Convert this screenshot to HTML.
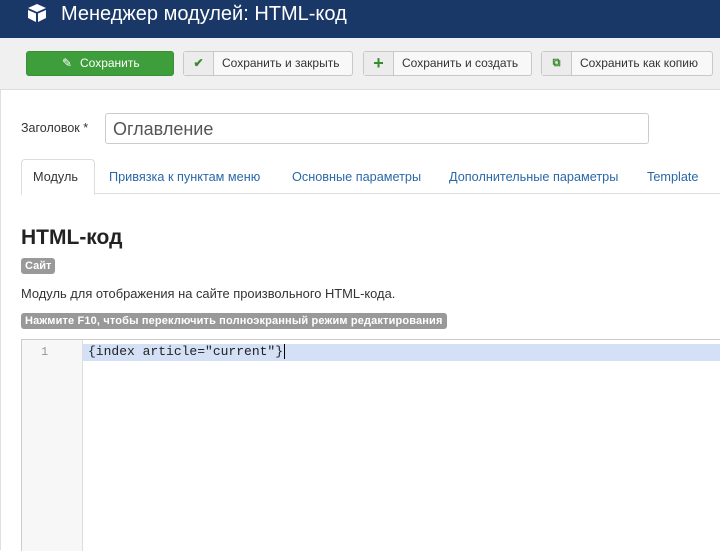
<!DOCTYPE html>
<html><head><meta charset="utf-8"><style>
*{margin:0;padding:0;box-sizing:border-box}
body{width:720px;height:550px;overflow:hidden;background:#fff;font-family:"Liberation Sans",sans-serif;position:relative}
.lb{position:absolute;left:0;top:38px;width:1px;height:512px;background:#e0e0e0}
.hdr{position:absolute;left:0;top:0;width:720px;height:38px;background:#1a3867;color:#fff}
.hdr .t{position:absolute;left:61px;top:2px;font-size:20px;line-height:24px}
.tb{position:absolute;left:0;top:38px;width:720px;height:52px;background:#f0f0f0;border-bottom:1px solid #ddd}
.btn{position:absolute;top:13px;height:25px;border:1px solid #c8c8c8;border-radius:3px;background:#f8f8f8;font-size:12px;color:#333;line-height:23px}
.btn .ic{position:absolute;left:0;top:0;width:30px;height:23px;border-right:1px solid #c8c8c8;background:#ececec;text-align:center;font-weight:bold;color:#3a8a2f}
.btn .tx{position:absolute;left:38px;top:0;white-space:nowrap}
.lbl{position:absolute;font-size:13px;color:#333}
.inp{position:absolute;left:105px;top:113px;width:544px;height:31px;border:1px solid #ccc;border-radius:3px;font-size:18px;color:#555;padding:5px 7px;line-height:20px}
.tabs{position:absolute;left:21px;top:193px;width:699px;border-top:1px solid #ddd}
.tab{position:absolute;font-size:12.7px;color:#2a69a8}
.badge{position:absolute;background:#999;color:#fff;font-weight:bold;font-size:11px;border-radius:3px;line-height:16px;padding:0 4px}
.ed{position:absolute;left:21px;top:339px;width:700px;height:212px;border:1px solid #ccc;border-right:none;border-bottom:none}
.gut{position:absolute;left:0;top:0;width:61px;height:100%;background:#f7f7f7;border-right:1px solid #ddd}
</style></head><body>
<div class="lb"></div>
<div class="hdr">
<svg style="position:absolute;left:27px;top:3px" width="20" height="20" viewBox="0 0 20 20"><path d="M10 1 L19 5 L10 9 L1 5Z" fill="#fff"/><path d="M1 7 L9 10.5 V19 L1 15Z M19 7 L11 10.5 V19 L19 15Z" fill="#fff"/></svg>
<div class="t">Менеджер модулей: HTML-код</div></div>
<div class="tb">
<div class="btn" style="left:26px;width:148px;background:#3f9e3c;border-color:#3a8f37;color:#fff"><span style="position:absolute;left:35px;top:0">&#9998;</span><span class="tx" style="left:53px">Сохранить</span></div>
<div class="btn" style="left:183px;width:170px"><span class="ic">✔</span><span class="tx">Сохранить и закрыть</span></div>
<div class="btn" style="left:363px;width:169px"><span class="ic" style="font-size:18px">+</span><span class="tx">Сохранить и создать</span></div>
<div class="btn" style="left:541px;width:172px"><span class="ic" style="font-size:11px">⧉</span><span class="tx">Сохранить как копию</span></div>
</div>
<div class="lbl" style="left:21px;top:121px;font-size:12.5px">Заголовок *</div>
<div class="inp">Оглавление</div>
<div class="tabs"></div>
<div style="position:absolute;left:21px;top:159px;width:74px;height:36px;border:1px solid #ddd;border-bottom:1px solid #fff;border-radius:4px 4px 0 0;background:#fff"></div>
<div class="tab" style="left:33px;top:170px;color:#333">Модуль</div>
<div class="tab" style="left:109px;top:170px">Привязка к пунктам меню</div>
<div class="tab" style="left:292px;top:170px">Основные параметры</div>
<div class="tab" style="left:449px;top:170px">Дополнительные параметры</div>
<div class="tab" style="left:647px;top:170px">Template</div>
<div style="position:absolute;left:21px;top:226px;font-size:21px;font-weight:bold;color:#222">HTML-код</div>
<div class="badge" style="left:21px;top:258px">Сайт</div>
<div class="lbl" style="left:21px;top:286px;font-size:12.9px">Модуль для отображения на сайте произвольного HTML-кода.</div>
<div class="badge" style="left:21px;top:313px;font-size:11px;letter-spacing:0.15px">Нажмите F10, чтобы переключить полноэкранный режим редактирования</div>
<div class="ed"><div class="gut"></div>
<div style="position:absolute;left:61px;top:4px;width:640px;height:17px;background:#d3e0f5"></div>
<div style="position:absolute;left:19px;top:5px;font-family:'Liberation Mono',monospace;font-size:12px;color:#999">1</div>
<div style="position:absolute;left:66px;top:4px;font-family:'Liberation Mono',monospace;font-size:13px;color:#222">{index article="current"}<span style="border-left:1px solid #000;margin-left:1px"></span></div>
</div>
</body></html>
